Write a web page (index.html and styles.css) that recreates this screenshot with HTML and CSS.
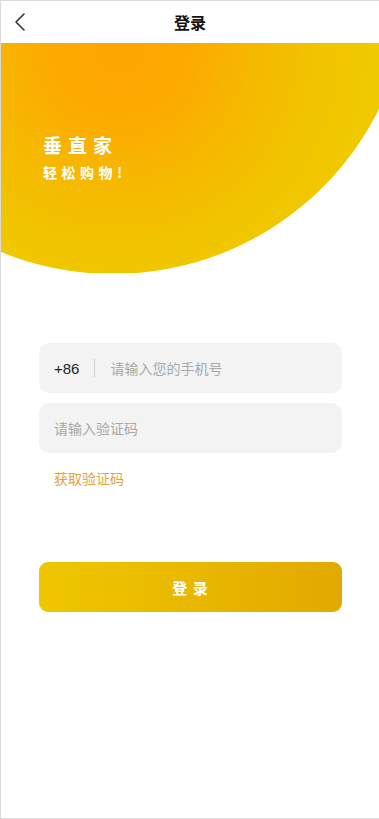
FILE: index.html
```html
<!DOCTYPE html>
<html lang="zh">
<head>
<meta charset="utf-8">
<title>登录</title>
<link rel="stylesheet" href="styles.css">
</head>
<body>
<div class="page">
  <header class="topbar">
    <span class="back">
      <svg width="12" height="18" viewBox="0 0 12 18"><path d="M10 1 L2 9 L10 17" fill="none" stroke="#333" stroke-width="1.6" stroke-linecap="round" stroke-linejoin="round"/></svg>
    </span>
    <h1 class="title">登录</h1>
  </header>
  <section class="hero">
    <div class="blob"></div>
    <div class="brand">
      <div class="brand-name">垂直家</div>
      <div class="brand-slogan">轻松购物!</div>
    </div>
  </section>
  <main class="form">
    <div class="field">
      <span class="prefix">+86</span>
      <span class="divider"></span>
      <span class="placeholder">请输入您的手机号</span>
    </div>
    <div class="field">
      <span class="placeholder">请输入验证码</span>
    </div>
    <div class="getcode">获取验证码</div>
    <button class="submit">登 录</button>
  </main>
</div>
</body>
</html>
```
FILE: styles.css
```css
* { box-sizing: border-box; }
html, body { margin: 0; padding: 0; }
body {
  font-family: "Noto Sans CJK SC", "Noto Sans", sans-serif;
  background: #fff;
}
.page {
  width: 379px;
  height: 819px;
  border-top: 1px solid #dcdcdc;
  border-left: 1px solid #dcdcdc;
  border-bottom: 1px solid #dcdcdc;
  overflow: hidden;
  display: flex;
  flex-direction: column;
}
.topbar {
  height: 42px;
  display: flex;
  align-items: center;
  justify-content: center;
  position: relative;
  flex-shrink: 0;
}
.back {
  position: absolute;
  left: 13px;
  top: 12px;
  display: flex;
}
.title {
  margin: 0;
  font-size: 16px;
  font-weight: 700;
  color: #111;
}
.hero {
  height: 230px;
  position: relative;
  overflow: hidden;
  flex-shrink: 0;
}
.blob {
  position: absolute;
  left: -185px;
  top: -363px;
  width: 594px;
  height: 594px;
  border-radius: 50%;
  background: radial-gradient(circle at 51% 62%, #ffa500 0%, #fcab00 16%, #f6b800 28%, #f1c400 42%, #efcb00 58%);
}
.brand {
  position: relative;
  padding: 90px 0 0 42px;
  color: #fff;
  font-weight: 700;
}
.brand-name {
  font-size: 19px;
  letter-spacing: 6px;
  line-height: 24px;
}
.brand-slogan {
  font-size: 14px;
  letter-spacing: 4.5px;
  line-height: 18px;
  margin-top: 6px;
}
.form {
  padding: 70px 37px 0 38px;
  display: flex;
  flex-direction: column;
}
.field {
  height: 50px;
  background: #f3f3f3;
  border-radius: 10px;
  display: flex;
  align-items: center;
  padding: 0 15px;
  margin-bottom: 10px;
  font-size: 14px;
}
.prefix {
  font-family: "Liberation Sans", "Noto Sans", sans-serif;
  font-size: 15px;
  color: #222;
}
.divider {
  width: 1px;
  height: 18px;
  background: #d0d0d0;
  margin: 0 15px;
}
.placeholder {
  color: #a8a8a8;
}
.getcode {
  color: #e5a23c;
  font-size: 14px;
  padding-left: 15px;
  margin-top: 5px;
  line-height: 20px;
}
.submit {
  margin-top: 74px;
  height: 50px;
  border: none;
  border-radius: 9px;
  background: linear-gradient(90deg, #efc700, #e2a900);
  color: #fff;
  font-family: inherit;
  font-size: 15px;
  font-weight: 700;
  letter-spacing: 1px;
}
```
